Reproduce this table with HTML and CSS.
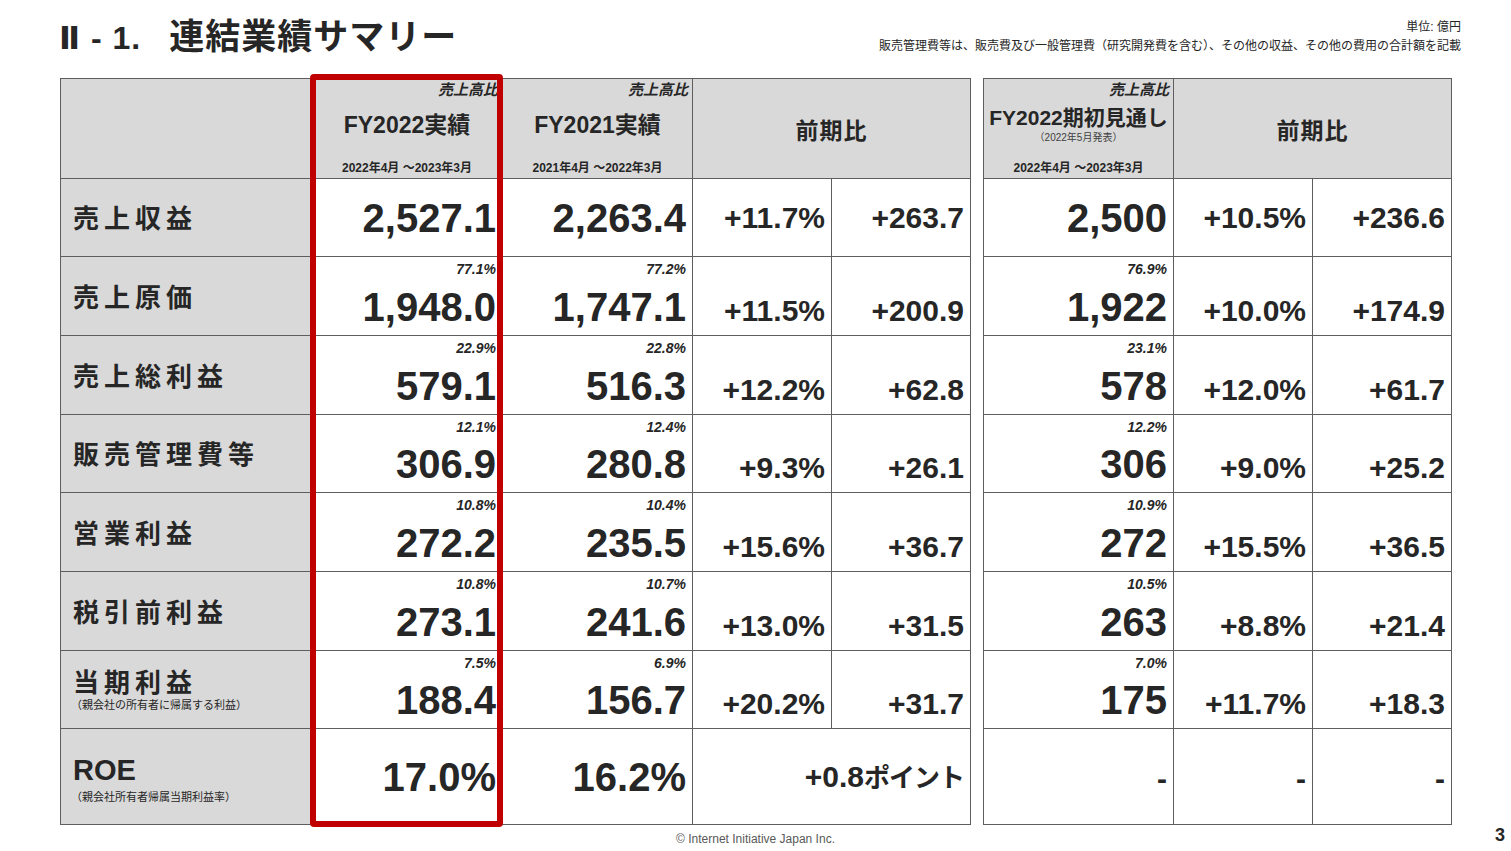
FILE: index.html
```html
<!DOCTYPE html>
<html lang="ja">
<head>
<meta charset="utf-8">
<title>連結業績サマリー</title>
<link rel="stylesheet" href="styles.css">
</head>
<body>
<div class="slide">
  <header class="top">
    <h1 class="title"><span class="num-part">Ⅱ - 1.</span><span class="jp-part">連結業績サマリー</span></h1>
    <div class="notes">
      <div>単位: 億円</div>
      <div>販売管理費等は、販売費及び一般管理費（研究開発費を含む）、その他の収益、その他の費用の合計額を記載</div>
    </div>
  </header>

  <main class="tables">
    <div class="tbl t1">
      <div class="hd"></div>
      <div class="hd hcol">
        <div class="hratio">売上高比</div>
        <div class="htitle">FY2022実績</div>
        <div class="hdate">2022年4月 ～2023年3月</div>
      </div>
      <div class="hd hcol">
        <div class="hratio">売上高比</div>
        <div class="htitle">FY2021実績</div>
        <div class="hdate">2021年4月 ～2022年3月</div>
      </div>
      <div class="hd span2 hcenter">前期比</div>

      <div class="lbl">売上収益</div>
      <div class="val mid"><span class="num">2,527.1</span></div>
      <div class="val mid"><span class="num">2,263.4</span></div>
      <div class="val mid"><span class="pct">+11.7%</span></div>
      <div class="val mid"><span class="pct">+263.7</span></div>

      <div class="lbl">売上原価</div>
      <div class="val"><span class="rt">77.1%</span><span class="num">1,948.0</span></div>
      <div class="val"><span class="rt">77.2%</span><span class="num">1,747.1</span></div>
      <div class="val end"><span class="pct">+11.5%</span></div>
      <div class="val end"><span class="pct">+200.9</span></div>

      <div class="lbl">売上総利益</div>
      <div class="val"><span class="rt">22.9%</span><span class="num">579.1</span></div>
      <div class="val"><span class="rt">22.8%</span><span class="num">516.3</span></div>
      <div class="val end"><span class="pct">+12.2%</span></div>
      <div class="val end"><span class="pct">+62.8</span></div>

      <div class="lbl">販売管理費等</div>
      <div class="val"><span class="rt">12.1%</span><span class="num">306.9</span></div>
      <div class="val"><span class="rt">12.4%</span><span class="num">280.8</span></div>
      <div class="val end"><span class="pct">+9.3%</span></div>
      <div class="val end"><span class="pct">+26.1</span></div>

      <div class="lbl">営業利益</div>
      <div class="val"><span class="rt">10.8%</span><span class="num">272.2</span></div>
      <div class="val"><span class="rt">10.4%</span><span class="num">235.5</span></div>
      <div class="val end"><span class="pct">+15.6%</span></div>
      <div class="val end"><span class="pct">+36.7</span></div>

      <div class="lbl">税引前利益</div>
      <div class="val"><span class="rt">10.8%</span><span class="num">273.1</span></div>
      <div class="val"><span class="rt">10.7%</span><span class="num">241.6</span></div>
      <div class="val end"><span class="pct">+13.0%</span></div>
      <div class="val end"><span class="pct">+31.5</span></div>

      <div class="lbl lbl2">
        <div class="lmain">当期利益</div>
        <div class="lsub">（親会社の所有者に帰属する利益）</div>
      </div>
      <div class="val"><span class="rt">7.5%</span><span class="num">188.4</span></div>
      <div class="val"><span class="rt">6.9%</span><span class="num">156.7</span></div>
      <div class="val end"><span class="pct">+20.2%</span></div>
      <div class="val end"><span class="pct">+31.7</span></div>

      <div class="lbl lbl2 roe">
        <div class="lmain roe-main">ROE</div>
        <div class="lsub">（親会社所有者帰属当期利益率）</div>
      </div>
      <div class="val mid"><span class="num">17.0%</span></div>
      <div class="val mid"><span class="num">16.2%</span></div>
      <div class="val mid span2"><span class="pct">+0.8<span class="kana">ポイント</span></span></div>

      <div class="redbox"></div>
    </div>

    <div class="tbl t2">
      <div class="hd hcol">
        <div class="hratio">売上高比</div>
        <div class="htitle htitle2">FY2022期初見通し</div>
        <div class="hnote">（2022年5月発表）</div>
        <div class="hdate">2022年4月 ～2023年3月</div>
      </div>
      <div class="hd span2 hcenter">前期比</div>

      <div class="val mid"><span class="num">2,500</span></div>
      <div class="val mid"><span class="pct">+10.5%</span></div>
      <div class="val mid"><span class="pct">+236.6</span></div>

      <div class="val"><span class="rt">76.9%</span><span class="num">1,922</span></div>
      <div class="val end"><span class="pct">+10.0%</span></div>
      <div class="val end"><span class="pct">+174.9</span></div>

      <div class="val"><span class="rt">23.1%</span><span class="num">578</span></div>
      <div class="val end"><span class="pct">+12.0%</span></div>
      <div class="val end"><span class="pct">+61.7</span></div>

      <div class="val"><span class="rt">12.2%</span><span class="num">306</span></div>
      <div class="val end"><span class="pct">+9.0%</span></div>
      <div class="val end"><span class="pct">+25.2</span></div>

      <div class="val"><span class="rt">10.9%</span><span class="num">272</span></div>
      <div class="val end"><span class="pct">+15.5%</span></div>
      <div class="val end"><span class="pct">+36.5</span></div>

      <div class="val"><span class="rt">10.5%</span><span class="num">263</span></div>
      <div class="val end"><span class="pct">+8.8%</span></div>
      <div class="val end"><span class="pct">+21.4</span></div>

      <div class="val"><span class="rt">7.0%</span><span class="num">175</span></div>
      <div class="val end"><span class="pct">+11.7%</span></div>
      <div class="val end"><span class="pct">+18.3</span></div>

      <div class="val mid"><span class="pct dash">-</span></div>
      <div class="val mid"><span class="pct dash">-</span></div>
      <div class="val mid"><span class="pct dash">-</span></div>
    </div>
  </main>

  <footer class="foot">
    <div class="copy">© Internet Initiative Japan Inc.</div>
    <div class="page">3</div>
  </footer>
</div>
</body>
</html>
```

FILE: styles.css
```css
* { box-sizing: border-box; margin: 0; padding: 0; }

html, body {
  background: #ffffff;
}

body {
  font-family: "Liberation Sans", "Noto Sans CJK JP", sans-serif;
  color: #262626;
}

.slide {
  position: relative;
  width: 1511px;
  height: 851px;
  overflow: hidden;
}

/* ---------- top header ---------- */
.top {
  height: 78px;
  display: flex;
  justify-content: space-between;
  align-items: flex-start;
  padding: 0 50px 0 59px;
}

.title {
  padding-top: 17px;
  font-size: 35px;
  line-height: 40px;
  font-weight: 700;
  color: #262626;
  white-space: nowrap;
}

.num-part {
  font-family: "Liberation Sans", "DejaVu Sans", "Noto Sans CJK JP", sans-serif;
  font-size: 32px;
  letter-spacing: 1px;
  margin-right: 28px;
}

.jp-part {
  letter-spacing: 1px;
}

.notes {
  padding-top: 18px;
  font-size: 12px;
  line-height: 19px;
  text-align: right;
  color: #262626;
  white-space: nowrap;
}

/* ---------- tables ---------- */
.tables {
  display: flex;
  gap: 12px;
  padding-left: 60px;
  align-items: flex-start;
}

.tbl {
  position: relative;
  display: grid;
  gap: 1px;
  padding: 1px;
  background: #5e5e5e;
  grid-template-rows: 99px 77px 78px 78px 77px 78px 78px 77px 95px;
}

.t1 {
  grid-template-columns: 250px 190px 189px 138px 138px;
}

.t2 {
  grid-template-columns: 189px 138px 138px;
}

.tbl > div {
  background: #ffffff;
}

.tbl > .hd,
.tbl > .lbl {
  background: #d9d9d9;
}

.span2 {
  grid-column: span 2;
}

/* header cells */
.hcol {
  display: flex;
  flex-direction: column;
  align-items: center;
  padding-bottom: 3px;
}

.hratio {
  align-self: flex-end;
  padding: 2px 4px 0 0;
  font-size: 15px;
  line-height: 18px;
  font-weight: 700;
  font-style: italic;
}

.htitle {
  margin-top: 12px;
  font-size: 23px;
  line-height: 28px;
  font-weight: 700;
  white-space: nowrap;
}

.htitle2 {
  margin-top: 6px;
  font-size: 21px;
  line-height: 26px;
}

.hnote {
  font-size: 10px;
  line-height: 13px;
  color: #404040;
}

.hdate {
  margin-top: auto;
  font-size: 12px;
  line-height: 14px;
  font-weight: 700;
  white-space: nowrap;
}

.hcenter {
  display: flex;
  align-items: center;
  justify-content: center;
  font-size: 23px;
  font-weight: 700;
  letter-spacing: 1px;
}

/* label cells */
.lbl {
  display: flex;
  align-items: center;
  padding: 3px 0 0 12px;
  font-size: 26px;
  line-height: 32px;
  font-weight: 700;
  letter-spacing: 5px;
}

.lbl2 {
  flex-direction: column;
  align-items: flex-start;
  justify-content: center;
  padding-top: 0;
}

.lmain {
  line-height: 30px;
}

.roe-main {
  font-size: 29px;
  letter-spacing: 0;
  line-height: 32px;
}

.roe {
  padding-top: 5px;
}

.roe .lsub {
  margin-top: 4px;
}

.lsub {
  font-size: 11px;
  line-height: 14px;
  font-weight: 400;
  letter-spacing: 0;
  margin-left: -2px;
}

/* value cells */
.val {
  display: flex;
  flex-direction: column;
  justify-content: space-between;
  align-items: flex-end;
  padding: 4px 6px 8px 4px;
}

.val.mid {
  justify-content: center;
  padding-top: 0;
  padding-bottom: 0;
}

.val.end {
  justify-content: flex-end;
  padding-bottom: 9px;
}

.rt {
  font-size: 14px;
  line-height: 16px;
  font-weight: 700;
  font-style: italic;
}

.num {
  font-size: 40px;
  line-height: 1;
  font-weight: 700;
  white-space: nowrap;
}

.pct {
  font-size: 30px;
  line-height: 1;
  font-weight: 700;
  white-space: nowrap;
}

.kana {
  font-size: 26px;
  letter-spacing: -1px;
}

.dash {
  padding-top: 4px;
}

/* red highlight frame */
.redbox {
  position: absolute;
  left: 250px;
  top: -4px;
  width: 193px;
  height: 753px;
  border: 6px solid #c00000;
  border-radius: 4px;
  background: transparent !important;
  pointer-events: none;
}

/* ---------- footer ---------- */
.foot {
  position: relative;
  height: 26px;
  display: flex;
  justify-content: center;
  align-items: flex-start;
}

.copy {
  padding-top: 7px;
  font-size: 12px;
  line-height: 14px;
  color: #595959;
}

.page {
  position: absolute;
  right: 6px;
  top: 0;
  font-size: 18px;
  line-height: 20px;
  font-weight: 700;
  color: #262626;
}
```
